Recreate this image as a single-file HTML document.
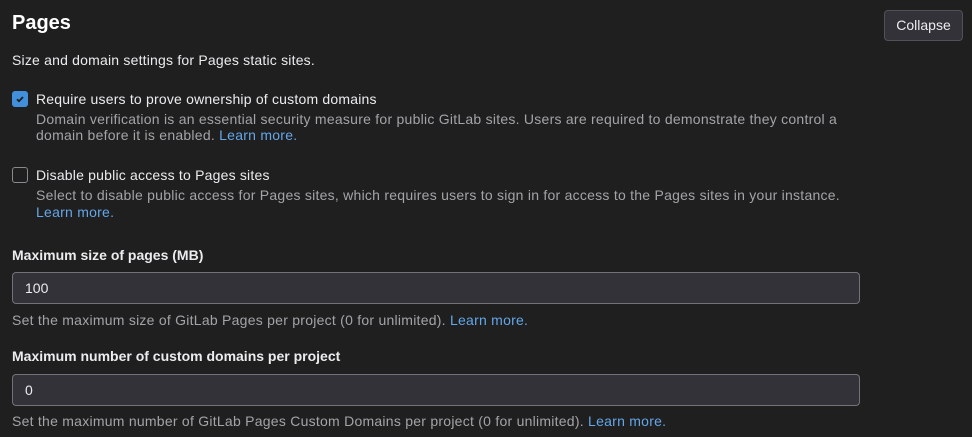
<!DOCTYPE html>
<html><head><style>
body{margin:0;background:#1f1f1f;color:#ececef;font-family:"Liberation Sans",sans-serif;width:972px;height:437px;overflow:hidden;position:relative}
.a{position:absolute;white-space:nowrap}
h2{position:absolute;left:12px;top:12px;margin:0;font-size:20px;font-weight:bold;color:#fff}
.t{font-size:14px;letter-spacing:0.2px}
.m{font-size:14px;color:#a4a3a8;letter-spacing:0.25px}
.l{color:#63a6e9}
.b{font-weight:bold;font-size:14px}
.in{position:absolute;left:12px;width:846px;height:30px;border:1px solid #737278;border-radius:4px;background:#333238;font-size:14px;line-height:30px;text-indent:12px;color:#ececef}
.cb{position:absolute;left:12px;width:16px;height:16px;border-radius:3px;box-sizing:border-box}
.btn{position:absolute;left:884px;top:10px;width:79px;height:31px;border:1px solid #535158;border-radius:4px;background:#333238;box-sizing:border-box;font-size:14px;text-align:center;line-height:29px;color:#ececef}
</style></head><body>
<h2>Pages</h2>
<div class="btn">Collapse</div>
<div class="a t" style="left:12px;top:52px">Size and domain settings for Pages static sites.</div>
<div class="cb" style="top:91px;background:#428fdc"><svg width="16" height="16" viewBox="0 0 16 16"><path d="M5 8.2l2 2 4-4.2" stroke="#1f1f1f" stroke-width="1.8" fill="none"/></svg></div>
<div class="a t" style="left:36px;top:91px">Require users to prove ownership of custom domains</div>
<div class="a m" style="left:36px;top:111px">Domain verification is an essential security measure for public GitLab sites. Users are required to demonstrate they control a</div>
<div class="a m" style="left:36px;top:127px">domain before it is enabled. <span class="l">Learn more.</span></div>
<div class="cb" style="top:167px;border:1px solid #89888d"></div>
<div class="a t" style="left:36px;top:167px">Disable public access to Pages sites</div>
<div class="a m" style="left:36px;top:187px">Select to disable public access for Pages sites, which requires users to sign in for access to the Pages sites in your instance.</div>
<div class="a m l" style="left:36px;top:204px">Learn more.</div>
<div class="a b" style="left:12px;top:247px">Maximum size of pages (MB)</div>
<div class="in" style="top:272px">100</div>
<div class="a m" style="left:12px;top:312px">Set the maximum size of GitLab Pages per project (0 for unlimited). <span class="l">Learn more.</span></div>
<div class="a b" style="left:12px;top:348px">Maximum number of custom domains per project</div>
<div class="in" style="top:374px">0</div>
<div class="a m" style="left:12px;top:413px">Set the maximum number of GitLab Pages Custom Domains per project (0 for unlimited). <span class="l">Learn more.</span></div>
</body></html>
